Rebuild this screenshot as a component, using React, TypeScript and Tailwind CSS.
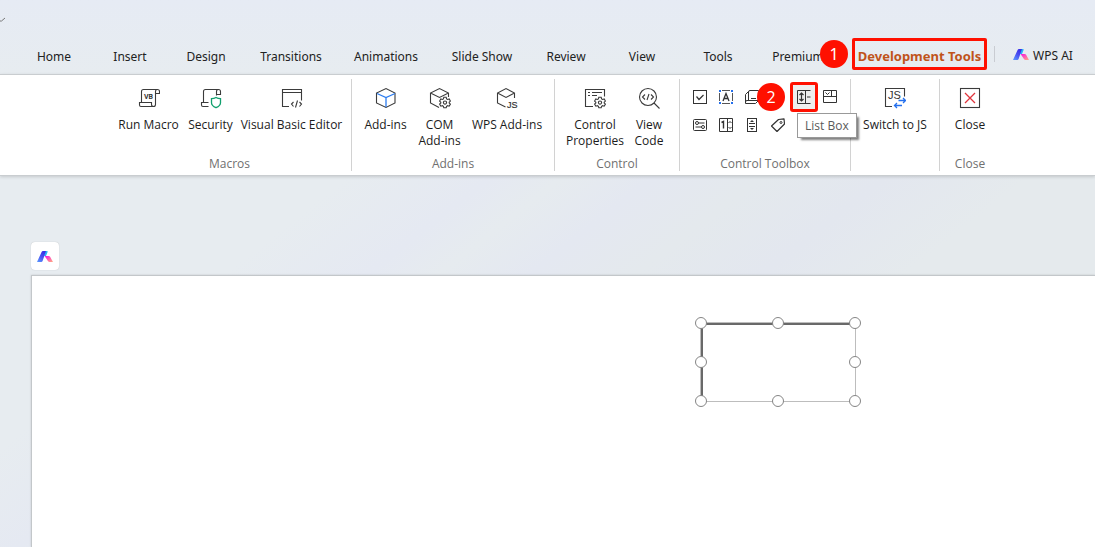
import type { ReactNode } from "react";

const tabs = [
    { name: "Home", width: "w-19" },
    { name: "Insert", width: "w-19" },
    { name: "Design", width: "w-19" },
    { name: "Transitions", width: "w-[94px]" },
    { name: "Animations", width: "w-24" },
    { name: "Slide Show", width: "w-24" },
    { name: "Review", width: "w-18" },
    { name: "View", width: "w-20" },
    { name: "Tools", width: "w-18" },
    { name: "Premium", width: "w-22" },
];

function Logo() {
    return (
        <svg width="16" height="11" viewBox="0 0 16 11" aria-hidden="true">
            <defs>
                <linearGradient id="logoBlue" x1="0" y1="1" x2="0.6" y2="0">
                    <stop offset="0" stopColor="#5b9cff" />
                    <stop offset="0.6" stopColor="#4a4df0" />
                    <stop offset="1" stopColor="#3a30e8" />
                </linearGradient>
                <linearGradient id="logoPink" x1="0" y1="0" x2="1" y2="1">
                    <stop offset="0" stopColor="#f312e8" />
                    <stop offset="0.5" stopColor="#ff5fb0" />
                    <stop offset="1" stopColor="#ffb080" />
                </linearGradient>
            </defs>
            <path d="M8 0h2q1 0 .6 1L9 5H7z" fill="#27b8f5" />
            <path d="M0 11 4.6 1Q5 0 6 0h3L5.6 10q-.4 1-1.4 1z" fill="url(#logoBlue)" />
            <path d="M7.6 5h4q1 0 1.5.8L16 11h-3.4q-1 0-1.5-.8z" fill="url(#logoPink)" />
        </svg>
    );
}

function Icon({ children }: { children: ReactNode }) {
    return (
        <svg width="22" height="22" viewBox="0 0 22 22" fill="none" stroke="#3b3b3b" strokeWidth="1.1" aria-hidden="true">
            {children}
        </svg>
    );
}

function SmallIcon({ children }: { children: ReactNode }) {
    return (
        <svg width="14" height="14" viewBox="0 0 14 14" fill="none" stroke="#333" strokeWidth="1" aria-hidden="true">
            {children}
        </svg>
    );
}

function Gear() {
    return (
        <g transform="translate(16 15.5)">
            <path d="M-1.2-5.2h2.4l.4 1.6 1 .6 1.6-.5 1.2 2.1L4.2-.3v.8l1.2 1.1-1.2 2.1-1.6-.5-1 .6-.4 1.5h-2.4l-.4-1.5-1-.6-1.6.5-1.2-2.1 1.2-1.1v-.8l-1.2-1.1 1.2-2.1 1.6.5 1-.6z" fill="#fff" />
            <circle cx="0" cy="0.1" r="1.6" />
        </g>
    );
}

function RunMacroIcon() {
    return (
        <Icon>
            <path d="M3.5 15.5v-11q0-2 2-2h14q2 0 2 2v2h-4M19.5 2.5q-2 0-2 2v13q0 2-2 2H3q-1.5 0-1.5-1.5v-2.5h12v2q0 2 2 2" />
            <text x="6" y="12" fontSize="7" fontWeight="700" fill="#333" stroke="none" fontFamily="Roboto, sans-serif">VB</text>
        </Icon>
    );
}

function SecurityIcon() {
    return (
        <Icon>
            <path d="M3.5 15.5v-11q0-2 2-2h13q2 0 2 2v3h-4M18.5 2.5q-2 0-2 2v4M8.5 19.5H3q-1.5 0-1.5-1.5v-2.5h7" />
            <path d="M16 10.5q2 1.2 4.5 1.2v4q0 3-4.5 5-4.5-2-4.5-5v-4q2.500 0 4.500-1.200z" stroke="#12a06e" strokeWidth="1.3" />
        </Icon>
    );
}

function EditorIcon() {
    return (
        <Icon>
            <path d="M8 19.5H1.5v-17h19v11M1.5 5.5h19" />
            <path d="m12.5 15-2 2 2 2.5M18.5 15l2 2-2 2.5M16.5 13.5l-2 7" />
        </Icon>
    );
}

function CubeIcon() {
    return (
        <Icon>
            <path d="M1.5 6v10l9.5 4.5 9-4.500V6L11 1.500z" />
            <path d="m2 6.5 9 4 9-4M11 10.5V20" stroke="#2b7cf0" strokeWidth="1.3" />
        </Icon>
    );
}

function ComIcon() {
    return (
        <Icon>
            <path d="M19.5 10V6L10.5 1.5l-9 4.5v10l8.5 4.5M1.5 6l9 4.5 9-4.5" />
            <Gear />
        </Icon>
    );
}

function JsCubeIcon() {
    return (
        <Icon>
            <path d="M18.5 11V6L10 1.5 1.5 6v10l8 4M1.5 6l8.5 4.5L18.5 6" />
            <text x="11" y="20.5" fontSize="9" fill="#333" stroke="#333" strokeWidth=".2" fontFamily="Liberation Sans, sans-serif">JS</text>
        </Icon>
    );
}

function PropertiesIcon() {
    return (
        <Icon>
            <path d="M9 19.5H1.5v-17h19v7M4 5.5h2M8 5.5h10M4 8.5h2M8 8.5h5" />
            <Gear />
        </Icon>
    );
}

function ViewCodeIcon() {
    return (
        <Icon>
            <circle cx="10" cy="10" r="8.5" />
            <path d="m16 16 5.5 5.5M7 7.5 4.5 10 7 12.5M13 7.5l2.5 2.5-2.5 2.5M11 7l-2 6" />
        </Icon>
    );
}

function SwitchIcon() {
    return (
        <Icon>
            <path d="M8 19.5H1.5v-18h19v8" />
            <text x="4" y="11.5" fontSize="11" fill="#333" stroke="none" fontFamily="Liberation Sans, sans-serif">JS</text>
            <path d="M14.5 13.5h7M19 11l2.5 2.5L19 16M18 18.5h-7.5M13 16l-2.5 2.5L13 21" stroke="#2470ee" strokeWidth="1.3" />
        </Icon>
    );
}

function CloseIcon() {
    return (
        <Icon>
            <rect x="1.5" y="1.5" width="19" height="19" />
            <path d="m6 6 10 10M16 6 6 16" stroke="#e0343c" strokeWidth="1.3" />
        </Icon>
    );
}

const tools = [
    {
        name: "Check Box",
        icon: <><rect x=".5" y=".5" width="13" height="13" /><path d="m3.5 6.5 2.5 3 4.5-4.5" strokeWidth="1.2" /></>,
    },
    {
        name: "Text Box",
        icon: (
            <>
                <path d="M.5 3v8M13.5 3v8M3 .5h8M3 13.5h8" stroke="#555" />
                <path d="M4 11 7 3.5 10 11M5 8.5h4" strokeWidth="1.3" />
                <path d="M0 0h2v2H0zM12 0h2v2h-2zM0 12h2v2H0zM12 12h2v2h-2z" fill="#2470ee" stroke="none" />
            </>
        ),
    },
    {
        name: "Command Button",
        icon: <path d="M3.5 10.5V2q0-1.5 1.5-1.5h8.5v10H2Q.5 10.5.5 12v1.5h10l3-3M.5 12V4.5l3-3M6 8.5h5" />,
    },
    {
        name: "Option Button",
        icon: <><circle cx="7" cy="7" r="6" /><circle cx="7" cy="7" r="2" fill="#333" /></>,
    },
    {
        name: "List Box",
        icon: (
            <>
                <path d="M13.5 .5H.5v13h13M8.5 .5v13M10 7h3.5" />
                <path d="M4.5 2.5v9M2.5 5l2-2 2 2M2.5 9l2 2 2-2" strokeWidth="1.2" />
            </>
        ),
    },
    {
        name: "Combo Box",
        icon: <path d="M.5 .5h13v12H.5zM.5 6.5h13M8.5 .5v6M2.5 2.5l2 2 2-2" />,
    },
    {
        name: "Toggle Button",
        icon: (
            <>
                <rect x=".5" y="1.5" width="13" height="11" rx="1" />
                <circle cx="4" cy="5" r="1.5" />
                <circle cx="10" cy="9" r="1.5" />
                <path d="M5.5 5h6M2.5 9h6" />
            </>
        ),
    },
    {
        name: "Spin Button",
        icon: (
            <>
                <path d="M.5 .5h13v13H.5zM8.5 .5v13M9.5 5 11 3.5 12.5 5M9.5 9l1.5 1.5L12.5 9" />
                <path d="m2.5 4.5 2-1v7" strokeWidth="1.4" />
            </>
        ),
    },
    {
        name: "Scroll Bar",
        icon: (
            <>
                <rect x="2.5" y=".5" width="9" height="13" />
                <path d="M4 5.5h6M4 8.5h6" />
                <path d="m5 4 2-2 2 2zM5 10l2 2 2-2z" fill="#333" stroke="none" />
            </>
        ),
    },
    {
        name: "Label",
        icon: <><path d="M7.5 1.5 13 .8l.5 5.2L6 13.5.5 8z" strokeLinejoin="round" strokeWidth="1.2" /><circle cx="10" cy="4.5" r="1" /></>,
    },
];

function Group({ title, width, children }: { title?: string; width: string; children: ReactNode }) {
    return (
        <section className={`flex shrink-0 flex-col border-r border-[#d2d2d2] last:border-r-0 ${width}`}>
            <div className="flex grow items-start justify-center gap-3">{children}</div>
            <h2 className="h-4 text-center text-xs leading-[18px] text-[#707070]">{title}</h2>
        </section>
    );
}

function RibbonButton({ icon, width = "", children }: { icon: ReactNode; width?: string; children: ReactNode }) {
    return (
        <button className={`flex flex-col items-center gap-2 pt-2 text-center text-xs leading-4 whitespace-nowrap text-[#1c1c1c] ${width}`}>
            {icon}
            <span>{children}</span>
        </button>
    );
}

const handles = [
    "top-0 left-0",
    "top-0 left-1/2",
    "top-0 left-full",
    "top-1/2 left-0",
    "top-1/2 left-full",
    "top-full left-0",
    "top-full left-1/2",
    "top-full left-full",
];

export default function App() {
    return (
        <div className="flex min-h-screen flex-col overflow-hidden bg-[linear-gradient(142deg,#e7ecf0_32%,#e5e9f2_40%,#e6ebef_44%,#e4e8f1_49%,#e4e9ed_55%,#e3e7ef_62%,#e5eaed_70%)] font-['Noto_Sans',sans-serif]">
            <header className="bg-linear-to-b from-[#e6ebf4] to-[#e7ecf0]">
                <div className="flex h-9 items-center pt-1">
                    <svg width="6" height="6" viewBox="0 0 6 6" fill="none" stroke="#777" aria-hidden="true">
                        <path d="M0 4h1.5L5 1" />
                    </svg>
                </div>
                <nav className="flex h-[38px] items-start pt-0.5 pl-4 text-xs text-[#222]">
                    {tabs.map((tab) => (
                        <button key={tab.name} className={`h-8 shrink-0 pt-1.5 text-center ${tab.width}`}>{tab.name}</button>
                    ))}
                    <div className="relative ml-2.5 shrink-0">
                        <button className="h-8 w-[135px] rounded-xs border-3 border-[#ff1000] pt-1 text-center text-[13px] leading-4 font-bold whitespace-nowrap text-[#c0531a]">
                            Development Tools
                        </button>
                        <span className="absolute top-0.5 -left-8 flex size-7 items-center justify-center rounded-full bg-[#ff1000] text-base text-white">1</span>
                    </div>
                    <button className="mt-2 ml-[7px] flex h-4 shrink-0 items-center gap-1 border-l border-[#c9ccd2] pl-[18px]">
                        <Logo />
                        <span className="pt-1">WPS AI</span>
                    </button>
                </nav>
            </header>

            <div className="flex h-[102px] border-y border-[#c9cdd0] bg-white py-1 pl-[108px] font-['Open_Sans',sans-serif] shadow-[0_1px_3px_#00000026]">
                <Group title="Macros" width="w-[244px]">
                    <RibbonButton icon={<RunMacroIcon />} width="w-[58px]">Run Macro</RibbonButton>
                    <RibbonButton icon={<SecurityIcon />} width="w-[42px]">Security</RibbonButton>
                    <RibbonButton icon={<EditorIcon />} width="w-24">Visual Basic Editor</RibbonButton>
                </Group>
                <Group title="Add-ins" width="w-[203px]">
                    <RibbonButton icon={<CubeIcon />} width="w-[42px]">Add-ins</RibbonButton>
                    <RibbonButton icon={<ComIcon />} width="w-[42px]">COM<br />Add-ins</RibbonButton>
                    <RibbonButton icon={<JsCubeIcon />} width="w-[69px]">WPS Add-ins</RibbonButton>
                </Group>
                <Group title="Control" width="w-[125px]">
                    <RibbonButton icon={<PropertiesIcon />} width="w-13">Control<br />Properties</RibbonButton>
                    <RibbonButton icon={<ViewCodeIcon />} width="w-8">View<br />Code</RibbonButton>
                </Group>
                <Group title="Control Toolbox" width="w-[171px]">
                    <div className="relative grid grid-cols-6 pt-1">
                        {tools.map((tool) => (
                            <button
                                key={tool.name}
                                aria-label={tool.name}
                                className={`flex h-7 w-[26px] items-center justify-center ${tool.name === "List Box" ? "rounded-xs bg-[#eee] outline-3 -outline-offset-2 outline-[#ff1000]" : ""}`}
                            >
                                <SmallIcon>{tool.icon}</SmallIcon>
                            </button>
                        ))}
                        <span className="absolute top-1 left-[70px] flex size-7 items-center justify-center rounded-full bg-[#ff1000] text-base text-white">2</span>
                        <div role="tooltip" className="absolute top-[34px] left-[110px] z-10 border border-[#999] bg-white px-[7px] text-xs leading-[23px] whitespace-nowrap text-[#5a5a5a] shadow-[3px_3px_2px_-1px_#00000080]">
                            List Box
                        </div>
                    </div>
                </Group>
                <Group width="w-[89px]">
                    <RibbonButton icon={<SwitchIcon />}>Switch to JS</RibbonButton>
                </Group>
                <Group title="Close" width="w-[60px]">
                    <RibbonButton icon={<CloseIcon />}>Close</RibbonButton>
                </Group>
            </div>

            <main className="flex grow flex-col pt-[66px] pl-[31px]">
                <button aria-label="WPS AI" className="flex size-7 items-center justify-center rounded bg-white shadow-[0_0_1px_#00000040]">
                    <Logo />
                </button>
                <div className="relative mt-[5px] grow border-t border-l border-[#c3c7ca] bg-white shadow-[0_0_2px_#00000026]">
                    <div className="absolute top-[46px] left-[668px] h-20 w-[156px] border border-[#bdbdbd]">
                        <div className="size-full border-t-2 border-l-2 border-[#696969]" />
                        {handles.map((place) => (
                            <span key={place} className={`absolute size-3 -translate-1/2 rounded-full border border-[#858585] bg-white ${place}`} />
                        ))}
                    </div>
                </div>
            </main>
        </div>
    );
}
